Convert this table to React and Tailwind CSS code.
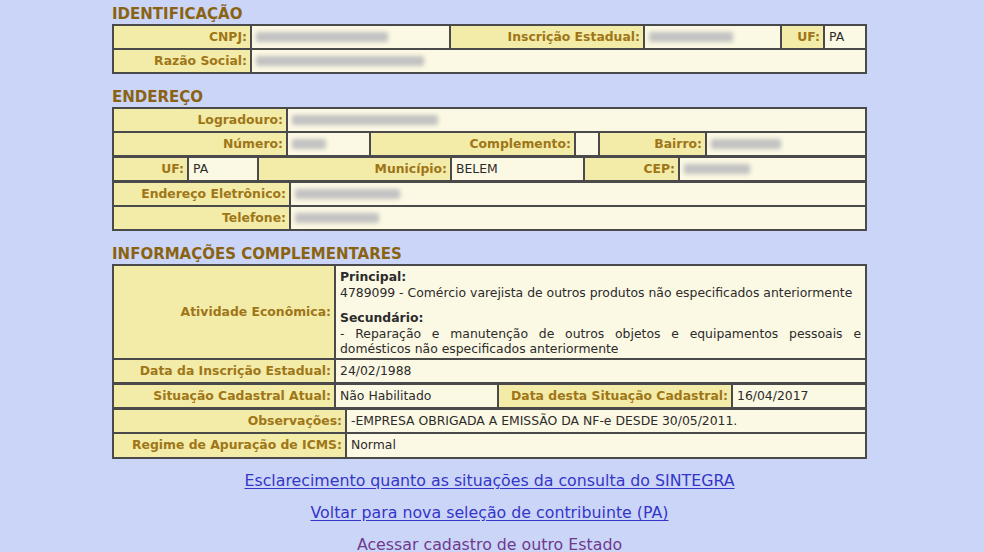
import React from "react";

const LAB =
  "flex items-center justify-end pl-[4px] pr-[3px] bg-[#f3eba8] text-[#9e7618] font-bold whitespace-nowrap";
const VAL = "flex items-center px-[4px] bg-[#fbf8e3] text-[#2b2b2b] whitespace-nowrap";

function Blur({ className }) {
  return (
    <span className={"inline-block h-[10px] rounded-[2px] bg-[#c2c2c2] blur-[2px] " + className} />
  );
}

function Heading({ children, className }) {
  return (
    <div className={"text-[15px] leading-[16px] font-bold text-[#8a6312] mb-[2px] " + className}>
      {children}
    </div>
  );
}

export default function App() {
  return (
    <div className="min-h-screen w-full bg-[#cbd5f8] font-['DejaVu_Sans',Verdana,sans-serif] text-[12.4px] overflow-hidden">
      <div className="ml-[112px] w-[755px] pt-[6px]">
        <Heading>IDENTIFICAÇÃO</Heading>
        <div className="border-2 border-[#4a4a4a] bg-[#4a4a4a]">
          <div className="flex h-[22px]">
            <div className={LAB + " w-[136px]"}>CNPJ:</div>
            <div className={VAL + " w-[199px] border-l-2 border-[#4a4a4a]"}>
              <Blur className="w-[132px]" />
            </div>
            <div className={LAB + " w-[194px] border-l-2 border-[#4a4a4a]"}>Inscrição Estadual:</div>
            <div className={VAL + " w-[137px] border-l-2 border-[#4a4a4a]"}>
              <Blur className="w-[84px]" />
            </div>
            <div className={LAB + " w-[43px] border-l-2 border-[#4a4a4a]"}>UF:</div>
            <div className={VAL + " flex-1 border-l-2 border-[#4a4a4a]"}>PA</div>
          </div>
          <div className="flex h-[24px] border-t-2 border-[#4a4a4a]">
            <div className={LAB + " w-[136px]"}>Razão Social:</div>
            <div className={VAL + " flex-1 border-l-2 border-[#4a4a4a]"}>
              <Blur className="w-[168px]" />
            </div>
          </div>
        </div>

        <Heading className="mt-[15px]">ENDEREÇO</Heading>
        <div className="border-2 border-[#4a4a4a] bg-[#4a4a4a]">
          <div className="flex h-[22px]">
            <div className={LAB + " w-[172px]"}>Logradouro:</div>
            <div className={VAL + " flex-1 border-l-2 border-[#4a4a4a]"}>
              <Blur className="w-[146px]" />
            </div>
          </div>
          <div className="flex h-[24px] border-t-2 border-[#4a4a4a]">
            <div className={LAB + " w-[172px]"}>Número:</div>
            <div className={VAL + " w-[83px] border-l-2 border-[#4a4a4a]"}>
              <Blur className="w-[34px]" />
            </div>
            <div className={LAB + " w-[205px] border-l-2 border-[#4a4a4a]"}>Complemento:</div>
            <div className={VAL + " w-[24px] border-l-2 border-[#4a4a4a]"}></div>
            <div className={LAB + " w-[107px] border-l-2 border-[#4a4a4a]"}>Bairro:</div>
            <div className={VAL + " flex-1 border-l-2 border-[#4a4a4a]"}>
              <Blur className="w-[70px]" />
            </div>
          </div>
          <div className="flex h-[25px] border-t-[3px] border-[#4a4a4a]">
            <div className={LAB + " w-[73px]"}>UF:</div>
            <div className={VAL + " w-[70px] border-l-2 border-[#4a4a4a]"}>PA</div>
            <div className={LAB + " w-[193px] border-l-2 border-[#4a4a4a]"}>Município:</div>
            <div className={VAL + " w-[133px] border-l-2 border-[#4a4a4a]"}>BELEM</div>
            <div className={LAB + " w-[95px] border-l-2 border-[#4a4a4a]"}>CEP:</div>
            <div className={VAL + " flex-1 border-l-2 border-[#4a4a4a]"}>
              <Blur className="w-[66px]" />
            </div>
          </div>
          <div className="flex h-[25px] border-t-[3px] border-[#4a4a4a]">
            <div className={LAB + " w-[175px]"}>Endereço Eletrônico:</div>
            <div className={VAL + " flex-1 border-l-2 border-[#4a4a4a]"}>
              <Blur className="w-[105px]" />
            </div>
          </div>
          <div className="flex h-[24px] border-t-2 border-[#4a4a4a]">
            <div className={LAB + " w-[175px]"}>Telefone:</div>
            <div className={VAL + " flex-1 border-l-2 border-[#4a4a4a]"}>
              <Blur className="w-[84px]" />
            </div>
          </div>
        </div>

        <Heading className="mt-[15px]">INFORMAÇÕES COMPLEMENTARES</Heading>
        <div className="border-2 border-[#4a4a4a] bg-[#4a4a4a]">
          <div className="flex h-[92px]">
            <div className={LAB + " w-[220px]"}>Atividade Econômica:</div>
            <div className="flex-1 border-l-2 border-[#4a4a4a] bg-[#fbf8e3] text-[#2b2b2b] px-[4px] pt-[3px] leading-[15.5px]">
              <div className="font-bold">Principal:</div>
              <div>4789099 - Comércio varejista de outros produtos não especificados anteriormente</div>
              <div className="font-bold mt-[10px]">Secundário:</div>
              <div className="text-justify">
                - Reparação e manutenção de outros objetos e equipamentos pessoais e domésticos não especificados anteriormente
              </div>
            </div>
          </div>
          <div className="flex h-[24px] border-t-2 border-[#4a4a4a]">
            <div className={LAB + " w-[220px]"}>Data da Inscrição Estadual:</div>
            <div className={VAL + " flex-1 border-l-2 border-[#4a4a4a]"}>24/02/1988</div>
          </div>
          <div className="flex h-[25px] border-t-[3px] border-[#4a4a4a]">
            <div className={LAB + " w-[220px]"}>Situação Cadastral Atual:</div>
            <div className={VAL + " w-[163px] border-l-2 border-[#4a4a4a]"}>Não Habilitado</div>
            <div className={LAB + " w-[234px] border-l-2 border-[#4a4a4a]"}>Data desta Situação Cadastral:</div>
            <div className={VAL + " flex-1 border-l-2 border-[#4a4a4a]"}>16/04/2017</div>
          </div>
          <div className="flex h-[25px] border-t-[3px] border-[#4a4a4a]">
            <div className={LAB + " w-[231px]"}>Observações:</div>
            <div className={VAL + " flex-1 border-l-2 border-[#4a4a4a]"}>
              -EMPRESA OBRIGADA A EMISSÃO DA NF-e DESDE 30/05/2011.
            </div>
          </div>
          <div className="flex h-[25px] border-t-2 border-[#4a4a4a]">
            <div className={LAB + " w-[231px]"}>Regime de Apuração de ICMS:</div>
            <div className={VAL + " flex-1 border-l-2 border-[#4a4a4a]"}>Normal</div>
          </div>
        </div>

        <div className="mt-[6px] flex flex-col items-center text-[15.8px] leading-[32px]">
          <a href="#" className="text-[#3535c8] underline underline-offset-2">
            Esclarecimento quanto as situações da consulta do SINTEGRA
          </a>
          <a href="#" className="text-[#3535c8] underline underline-offset-2">
            Voltar para nova seleção de contribuinte (PA)
          </a>
          <a href="#" className="text-[#6e3a8e] underline underline-offset-2">
            Acessar cadastro de outro Estado
          </a>
        </div>
      </div>
    </div>
  );
}
